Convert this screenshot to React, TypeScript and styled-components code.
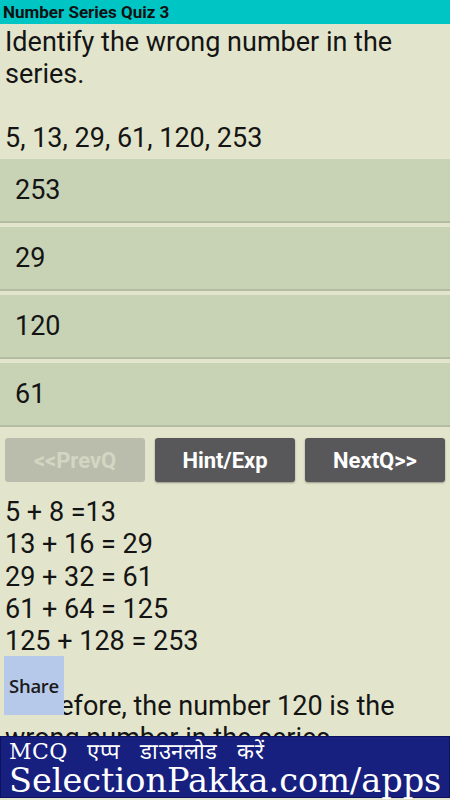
import React from "react";
import styled, { createGlobalStyle } from "styled-components";

const GlobalStyle = createGlobalStyle`
  html, body {
    margin: 0;
    padding: 0;
    background: #e2e5cb;
    overflow: hidden;
  }
  * {
    box-sizing: border-box;
  }
`;

const Screen = styled.div`
  position: relative;
  width: 450px;
  height: 800px;
  overflow: hidden;
  background: #e2e5cb;
  font-family: Roboto, "Noto Sans", sans-serif;
  color: #141414;
`;

const TitleBar = styled.div`
  height: 24px;
  background: #00c5c5;
  padding: 0 3px;
  font-size: 17px;
  font-weight: bold;
  line-height: 25px;
  color: #111;
`;

const Question = styled.div`
  padding: 2px 5px 0;
  font-size: 27px;
  line-height: 32px;
  white-space: pre-line;
  margin-bottom: 5px;
`;

const OptionList = styled.div`
  display: flex;
  flex-direction: column;
  gap: 4px;
`;

const Option = styled.div`
  height: 64px;
  background: #c8d3b5;
  border-bottom: 2px solid #b3bca1;
  padding-left: 15px;
  display: flex;
  align-items: center;
  font-size: 27px;
`;

const ButtonRow = styled.div`
  display: grid;
  grid-template-columns: repeat(3, 1fr);
  gap: 10px;
  padding: 0 5px;
  margin-top: 11px;
`;

const NavButton = styled.div<{ $disabled?: boolean }>`
  height: 44px;
  border-radius: 3px;
  display: flex;
  align-items: center;
  justify-content: center;
  font-size: 22px;
  font-weight: bold;
  background: ${(p) => (p.$disabled ? "#babdac" : "#58585a")};
  color: ${(p) => (p.$disabled ? "#d3d6c3" : "#ffffff")};
  box-shadow: ${(p) => (p.$disabled ? "none" : "0 1px 2px rgba(0,0,0,0.35)")};
`;

const Explanation = styled.div`
  margin-top: 14px;
  padding: 0 5px;
  font-size: 27px;
  line-height: 32.3px;
  white-space: pre-line;
`;

const ShareButton = styled.div`
  position: absolute;
  left: 4px;
  top: 656px;
  width: 60px;
  height: 59px;
  background: #b7c9ea;
  display: flex;
  align-items: center;
  justify-content: center;
  font-family: "Open Sans", "Noto Sans", sans-serif;
  font-size: 18.5px;
  font-weight: 600;
  letter-spacing: -0.3px;
  color: #1a1a1a;
`;

const Banner = styled.div`
  position: absolute;
  left: 0;
  right: 0;
  top: 736px;
  height: 62px;
  background: #17207f;
  border: 1px solid #0d1260;
  padding: 0 8px;
  color: #ffffff;
  font-family: "DejaVu Serif", "Liberation Serif", serif;
  display: flex;
  flex-direction: column;
`;

const BannerTop = styled.div`
  font-size: 22px;
  line-height: 30px;
  word-spacing: 12px;
  letter-spacing: 0.5px;
`;

const BannerMain = styled.div`
  font-size: 33.5px;
  line-height: 28px;
`;

const options = ["253", "29", "120", "61"];

const explanation = `5 + 8 =13
13 + 16 = 29
29 + 32 = 61
61 + 64 = 125
125 + 128 = 253

Therefore, the number 120 is the wrong number in the series.`;

export default function App() {
  return (
    <Screen>
      <GlobalStyle />
      <TitleBar>Number Series Quiz 3</TitleBar>
      <Question>
        {"Identify the wrong number in the series.\n\n5, 13, 29, 61, 120, 253"}
      </Question>
      <OptionList>
        {options.map((o) => (
          <Option key={o}>{o}</Option>
        ))}
      </OptionList>
      <ButtonRow>
        <NavButton $disabled>&lt;&lt;PrevQ</NavButton>
        <NavButton>Hint/Exp</NavButton>
        <NavButton>NextQ&gt;&gt;</NavButton>
      </ButtonRow>
      <Explanation>{explanation}</Explanation>
      <ShareButton>Share</ShareButton>
      <Banner>
        <BannerTop>MCQ एप्प डाउनलोड करें</BannerTop>
        <BannerMain>SelectionPakka.com/apps</BannerMain>
      </Banner>
    </Screen>
  );
}
